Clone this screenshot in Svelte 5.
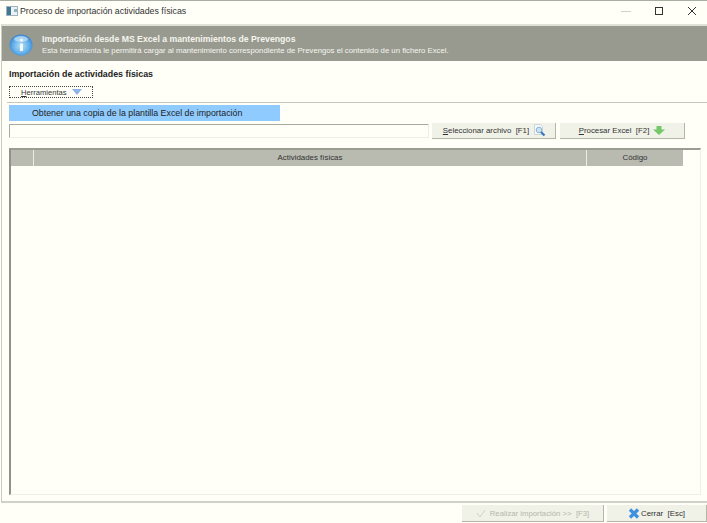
<script>
  const columns = [
    { label: '', width: 23 },
    { label: 'Actividades físicas', width: 553 },
    { label: 'Código', width: 96 }
  ];
</script>

<div class="window">
  <header class="titlebar">
    <svg class="appicon" width="12" height="10" viewBox="0 0 12 10">
      <rect x="0.500" y="0.500" width="11" height="9" fill="#eef2f2" stroke="#9fb4bf" />
      <rect x="1" y="1" width="4" height="8" fill="#3d7a92" />
      <rect x="8" y="3" width="3" height="3" fill="#8fb4c6" />
    </svg>
    <span class="title">Proceso de importación actividades físicas</span>
    <div class="winbtns">
      <svg width="10" height="10" viewBox="0 0 10 10"><path d="M0 5.500h10" stroke="#d2d2cc" /></svg>
      <svg width="10" height="10" viewBox="0 0 10 10"><rect x="1.500" y="1.500" width="7" height="7" fill="none" stroke="#333" /></svg>
      <svg width="10" height="10" viewBox="0 0 10 10"><path d="M1 1l8 8M9 1l-8 8" stroke="#333" /></svg>
    </div>
  </header>

  <main class="panel">
    <section class="banner">
      <svg class="infoicon" width="24" height="22" viewBox="0 0 24 22">
        <defs>
          <radialGradient id="ball" cx="50%" cy="55%" r="60%">
            <stop offset="0" stop-color="#b4e2f8" />
            <stop offset="0.6" stop-color="#62aee8" />
            <stop offset="1" stop-color="#2f78c8" />
          </radialGradient>
        </defs>
        <ellipse cx="12" cy="11" rx="11.500" ry="10.500" fill="url(#ball)" />
        <ellipse cx="12" cy="5" rx="7" ry="3" fill="#d8eefb" opacity="0.6" />
        <circle cx="12.500" cy="6" r="1.500" fill="#f4f8fb" />
        <path d="M11 9.500h3v7.500h-3z" fill="#f4f8fb" />
      </svg>
      <div class="banner-text">
        <div class="banner-head">Importación desde MS Excel a mantenimientos de Prevengos</div>
        <div class="banner-sub">Esta herramienta le permitirá cargar al mantenimiento correspondiente de Prevengos el contenido de un fichero Excel.</div>
      </div>
    </section>

    <h1>Importación de actividades físicas</h1>

    <div class="tools">
      <button class="toolbtn"><span><u>H</u>erramientas</span>
        <svg width="10" height="6" viewBox="0 0 10 6"><path d="M0 0h10L5 6z" fill="#8db4ea" /></svg>
      </button>
    </div>

    <div class="menu">
      <div class="menuitem">Obtener una copia de la plantilla Excel de importación</div>
    </div>

    <div class="filerow">
      <div class="fileinput"></div>
      <button class="btn select"><span><u>S</u>eleccionar archivo&nbsp; [F1]</span>
        <svg width="13" height="13" viewBox="0 0 13 13">
          <path d="M1.500.5h6l2 2v8h-8z" fill="#f6f9fa" stroke="#ccd6da" />
          <circle cx="6" cy="6" r="2.800" fill="#c8e4f4" stroke="#8db4d2" />
          <path d="M8 8l3.500 3.500" stroke="#3f78c0" stroke-width="2.200" />
        </svg>
      </button>
      <button class="btn process"><span><u>P</u>rocesar Excel&nbsp; [F2]</span>
        <svg width="12" height="9" viewBox="0 0 12 9"><path d="M3.500 0h5v3.500H12L6 9 0 3.500h3.500z" fill="#74c868" /></svg>
      </button>
    </div>

    <div class="grid">
      <div class="gridhead">
        {#each columns as col}
          <div class="gridcol" style="width: {col.width}px">{col.label}</div>
        {/each}
      </div>
    </div>
  </main>

  <footer class="footer">
    <button class="btn run" disabled>
      <svg width="10" height="9" viewBox="0 0 10 9"><path d="M1 4l3 4 5-7" fill="none" stroke="#cfd2ca" /></svg>
      <span>Realizar importación &gt;&gt;&nbsp; [F3]</span>
    </button>
    <button class="btn close">
      <svg width="12" height="11" viewBox="0 0 12 11"><path d="M2 1.500l8 8M10 1.500l-8 8" stroke="#3f90e0" stroke-width="3.200" /></svg>
      <span>Cerrar&nbsp; [Esc]</span>
    </button>
  </footer>
</div>

<style>
  :global(body) {
    margin: 0;
    background: #fffff8;
  }
  .window {
    width: 707px;
    height: 523px;
    display: flex;
    flex-direction: column;
    overflow: hidden;
    background: #fffff8;
    color: #3a3a3a;
    font-family: "Liberation Sans", sans-serif;
    font-size: 8.800px;
    border-top: 1px solid #a9aea2;
    box-sizing: border-box;
  }
  .titlebar {
    height: 23px;
    flex: none;
    display: flex;
    align-items: center;
    padding: 0 0 3px 6px;
    box-sizing: border-box;
    gap: 2px;
  }
  .appicon {
    flex: none;
  }
  .title {
    color: #333;
  }
  .winbtns {
    margin-left: auto;
    margin-right: 10px;
    display: flex;
    gap: 23px;
  }
  .panel {
    flex: 1;
    min-height: 0;
    margin-left: 1px;
    border-top: 2px solid #dfe2d6;
    border-left: 1px solid #c9ccc0;
    border-bottom: 2px solid #cfd2c6;
    display: flex;
    flex-direction: column;
  }
  .banner {
    height: 35px;
    flex: none;
    background: #989a90;
    color: #f5f5ee;
    display: flex;
    align-items: center;
    gap: 9px;
    padding-left: 7px;
  }
  .infoicon {
    flex: none;
    margin-top: 3px;
  }
  .banner-text {
    margin-top: 2px;
  }
  .banner-head {
    font-weight: 700;
    font-size: 8.700px;
    line-height: 12px;
  }
  .banner-sub {
    font-size: 7.750px;
    line-height: 12px;
  }
  h1 {
    margin: 7px 0 0 7px;
    font-size: 8.850px;
    line-height: 12px;
    font-weight: 700;
    color: #222;
  }
  .tools {
    margin: 6px 0 0 7px;
  }
  .toolbtn {
    width: 84px;
    height: 12px;
    padding: 0 0 0 11px;
    display: flex;
    align-items: center;
    gap: 5px;
    background: none;
    border: 1px dotted #444;
    font: inherit;
    font-size: 7.600px;
    color: #333;
  }
  .menu {
    margin: 4px 0 0 5px;
    padding: 2px 0 1px 2px;
    border-top: 1px solid #c6c8bc;
  }
  .menuitem {
    width: 271px;
    height: 16px;
    line-height: 16px;
    padding-left: 23px;
    box-sizing: border-box;
    background: #8fcbff;
    color: #222;
    box-shadow: 2px 0 0 #fff;
  }
  .filerow {
    margin: 1px 0 0 7px;
    display: flex;
    align-items: flex-start;
  }
  .fileinput {
    width: 420px;
    height: 14px;
    margin-top: 1px;
    box-sizing: border-box;
    border-top: 1px solid #a8aaa0;
    border-left: 1px solid #a8aaa0;
    border-bottom: 1px solid #eeeee6;
    border-right: 1px solid #eeeee6;
  }
  .btn {
    height: 16px;
    padding: 0;
    display: flex;
    align-items: center;
    justify-content: center;
    gap: 4px;
    background: #f0f2e8;
    border: none;
    border-right: 1px solid #b4b6aa;
    border-bottom: 1px solid #b4b6aa;
    box-sizing: border-box;
    font: inherit;
    font-size: 7.850px;
    color: #333;
  }
  .select {
    width: 124px;
    margin-left: 3px;
    padding-left: 2px;
  }
  .process {
    width: 125px;
    margin-left: 4px;
  }
  .grid {
    flex: 1;
    margin: 9px 6px 6px 7px;
    border-top: 2px solid #9a9c92;
    border-left: 2px solid #8f928a;
    border-right: 1px solid #efefe6;
    border-bottom: 1px solid #efefe6;
    min-height: 0;
  }
  .gridhead {
    display: flex;
    height: 16px;
    background: #b9bbb1;
    width: 672px;
  }
  .gridcol {
    line-height: 16px;
    text-align: center;
    border-right: 1px solid #eceee4;
    box-sizing: border-box;
    font-size: 7.900px;
    color: #333;
  }
  .gridcol:last-child {
    border-right: none;
  }
  .footer {
    height: 20px;
    flex: none;
    display: flex;
    justify-content: flex-end;
    gap: 3px;
    padding-top: 2px;
    box-sizing: border-box;
  }
  .run {
    width: 142px;
    height: 17px;
    font-size: 7.750px;
    color: #b4b6ac;
  }
  .close {
    width: 100px;
    height: 17px;
    gap: 1px;
  }
</style>
